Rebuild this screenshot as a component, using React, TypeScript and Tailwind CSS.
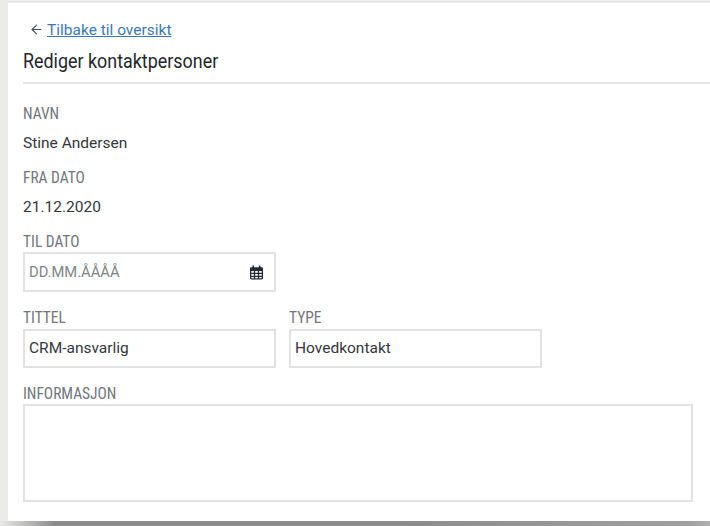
import { ArrowLeft } from "lucide-react";

function CalendarIcon() {
  return (
    <svg width="13" height="15" viewBox="0 0 13 15" className="block">
      <path fill="#222b33" d="M2.5 0.5h1.6v1.7h4.8V0.5h1.6v1.7h1.3c.6 0 1.2.5 1.2 1.1v10c0 .7-.6 1.2-1.2 1.2H1.2C.6 14.500 0 14 0 13.300v-10c0-.6.6-1.100 1.200-1.100h1.300z" />
      <g fill="#ffffff">
        <rect x="1.300" y="6" width="2.500" height="1.800" />
        <rect x="5.200" y="6" width="2.600" height="1.800" />
        <rect x="9.200" y="6" width="2.500" height="1.800" />
        <rect x="1.300" y="9" width="2.500" height="1.800" />
        <rect x="5.200" y="9" width="2.600" height="1.800" />
        <rect x="9.200" y="9" width="2.500" height="1.800" />
        <rect x="1.300" y="12" width="2.500" height="1.300" />
        <rect x="5.200" y="12" width="2.600" height="1.300" />
        <rect x="9.200" y="12" width="2.500" height="1.300" />
      </g>
    </svg>
  );
}

function Label({ children }: { children: React.ReactNode }) {
  return <div className="h-[22px] origin-left scale-x-[0.965] whitespace-nowrap text-[16px] leading-[24px] text-[#71767c] [font-stretch:condensed]">{children}</div>;
}

export default function App() {
  return (
    <div className="h-[526px] w-[710px] overflow-hidden bg-[#ebebe9] pt-[3px] font-['Roboto',sans-serif]">
      <div className="ml-[8px] h-[518px] w-[702px] bg-white pl-[15px]">
        <div className="flex h-[44px] items-end pb-[7px] pl-[6px]">
          <ArrowLeft size={15} strokeWidth={1.8} className="mb-[3px] mr-[3px] text-[#3f4f5f]" />
          <a className="text-[15.5px] leading-[20px] text-[#3b78b8] underline">Tilbake til oversikt</a>
        </div>
        <h1 className="h-[35px] origin-left scale-x-[0.895] whitespace-nowrap text-[20px] font-normal leading-[28px] text-[#23272b]">Rediger kontaktpersoner</h1>
        <div className="h-[2px] bg-[#e6e6e6]" />
        <div className="pt-[18px]">
          <Label>NAVN</Label>
          <div className="mt-[8px] h-[34px] text-[15.5px] leading-[22px] text-[#33383d]">Stine Andersen</div>
          <Label>FRA DATO</Label>
          <div className="mt-[8px] h-[34px] text-[15.5px] leading-[22px] text-[#33383d]">21.12.2020</div>
          <Label>TIL DATO</Label>
          <div className="flex h-[40px] w-[253px] items-center justify-between border-2 border-[#e2e2e2] pl-[4px] pr-[11px]">
            <span className="origin-left translate-y-[1px] scale-x-[0.95] text-[15.5px] text-[#80858a]">DD.MM.ÅÅÅÅ</span>
            <CalendarIcon />
          </div>
          <div className="mt-[14px] flex gap-[13px]">
            <div className="w-[253px]">
              <Label>TITTEL</Label>
              <div className="mt-[1px] flex h-[39px] items-center border-2 border-[#e2e2e2] pl-[4px] text-[15.5px] text-[#33383d]">CRM-ansvarlig</div>
            </div>
            <div className="w-[253px]">
              <Label>TYPE</Label>
              <div className="mt-[1px] flex h-[39px] items-center border-2 border-[#e2e2e2] pl-[4px] text-[15.5px] text-[#33383d]">Hovedkontakt</div>
            </div>
          </div>
          <div className="mt-[14px]">
            <Label>INFORMASJON</Label>
            <div className="h-[98px] w-[670px] border-2 border-[#e2e2e2]" />
          </div>
        </div>
      </div>
      <div className="h-[5px] bg-[linear-gradient(to_right,#e8e8e6_0px,#8c8c8c_55px,#8c8c8c_400px,#a0a0a0_690px,#b0b0b0_710px)]" />
    </div>
  );
}
